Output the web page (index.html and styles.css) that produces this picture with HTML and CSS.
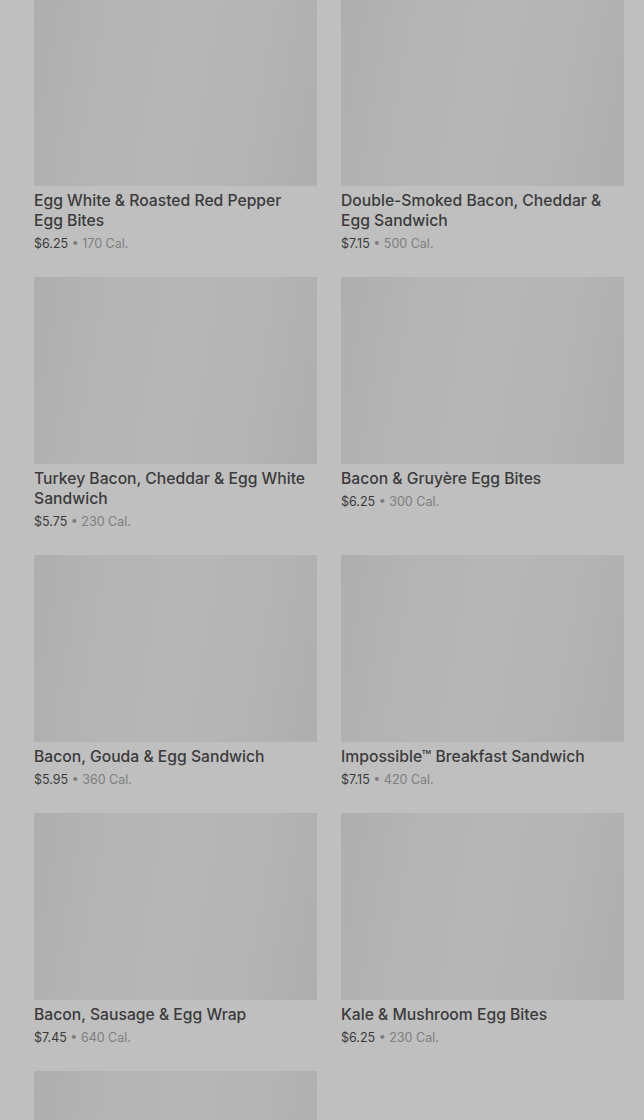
FILE: index.html
```html
<!DOCTYPE html>
<html lang="en">
<head>
    <meta charset="UTF-8">
    <title>Hot Breakfast</title>
    <link rel="stylesheet" href="styles.css">
</head>
<body>
    <div class="menu-grid">
        <div class="item">
            <div class="thumb"></div>
            <h3 class="item-name">Egg White &amp; Roasted Red Pepper Egg Bites</h3>
            <p class="item-meta"><span class="price">$6.25</span> • 170 Cal.</p>
        </div>
        <div class="item">
            <div class="thumb"></div>
            <h3 class="item-name">Double-Smoked Bacon, Cheddar &amp; Egg Sandwich</h3>
            <p class="item-meta"><span class="price">$7.15</span> • 500 Cal.</p>
        </div>
        <div class="item">
            <div class="thumb"></div>
            <h3 class="item-name">Turkey Bacon, Cheddar &amp; Egg White Sandwich</h3>
            <p class="item-meta"><span class="price">$5.75</span> • 230 Cal.</p>
        </div>
        <div class="item">
            <div class="thumb"></div>
            <h3 class="item-name">Bacon &amp; Gruyère Egg Bites</h3>
            <p class="item-meta"><span class="price">$6.25</span> • 300 Cal.</p>
        </div>
        <div class="item">
            <div class="thumb"></div>
            <h3 class="item-name">Bacon, Gouda &amp; Egg Sandwich</h3>
            <p class="item-meta"><span class="price">$5.95</span> • 360 Cal.</p>
        </div>
        <div class="item">
            <div class="thumb"></div>
            <h3 class="item-name">Impossible™ Breakfast Sandwich</h3>
            <p class="item-meta"><span class="price">$7.15</span> • 420 Cal.</p>
        </div>
        <div class="item">
            <div class="thumb"></div>
            <h3 class="item-name">Bacon, Sausage &amp; Egg Wrap</h3>
            <p class="item-meta"><span class="price">$7.45</span> • 640 Cal.</p>
        </div>
        <div class="item">
            <div class="thumb"></div>
            <h3 class="item-name">Kale &amp; Mushroom Egg Bites</h3>
            <p class="item-meta"><span class="price">$6.25</span> • 230 Cal.</p>
        </div>
        <div class="item">
            <div class="thumb"></div>
        </div>
    </div>
</body>
</html>
```
FILE: styles.css
```css
body {
    margin: 0;
    background-color: #bfbfbf;
    font-family: Inter, "Noto Sans", sans-serif;
    overflow: hidden;
}
.menu-grid {
    display: grid;
    grid-template-columns: 283px 283px;
    column-gap: 24px;
    align-items: start;
    padding: 0 20px 0 34px;
    margin-top: -1px;
}
.item {
    margin-bottom: 24px;
}
.thumb {
    height: 187px;
    background: linear-gradient(100deg, #aeaeae 0%, #b4b4b4 25%, #b6b6b6 50%, #b4b4b4 75%, #aeaeae 100%);
}
.item-name {
    margin: 5px 0 0;
    padding-right: 6px;
    font-size: 15.7px;
    font-weight: 500;
    line-height: 20px;
    color: #3b3b3b;
}
.item-meta {
    margin: 4px 0 0;
    font-size: 12.5px;
    line-height: 18px;
    color: #7e7e7e;
}
.price {
    color: #3a3a3a;
}
```
